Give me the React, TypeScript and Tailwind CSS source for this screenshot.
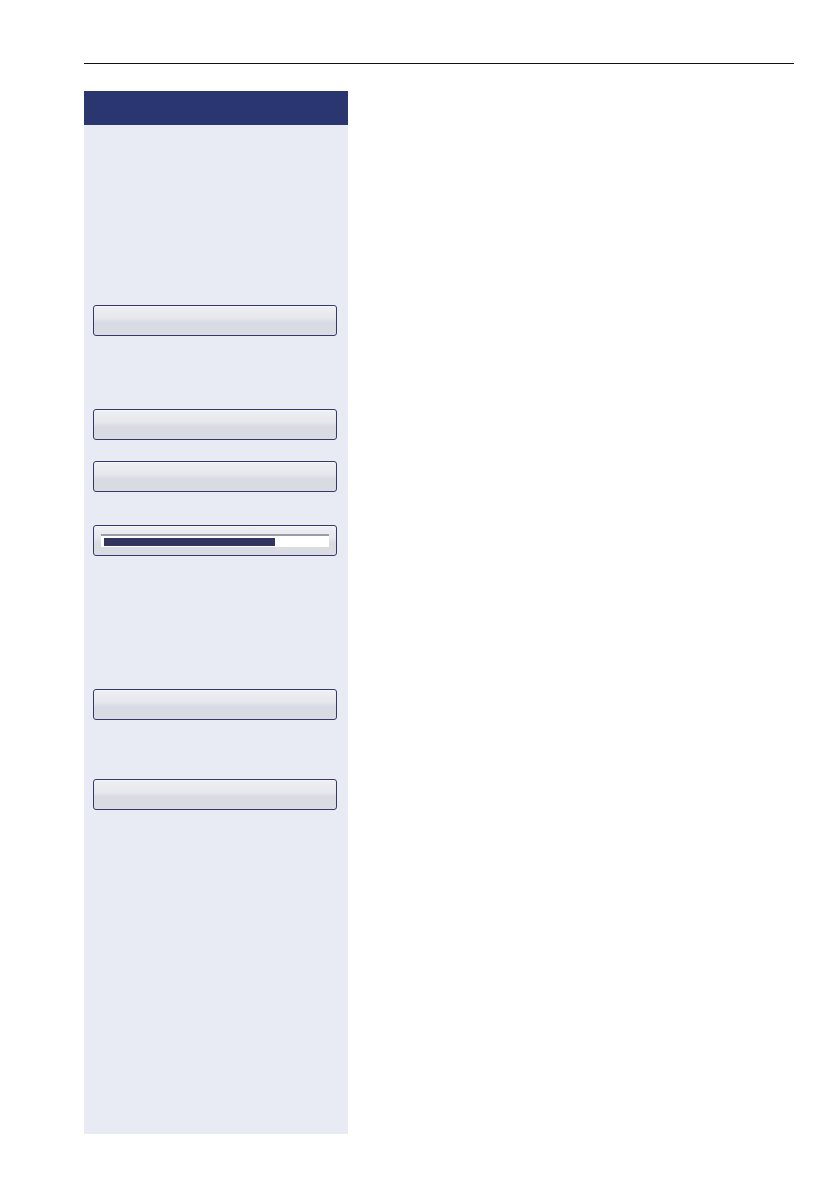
import React from "react";

const btn =
  "h-[31px] w-[244px] rounded-[3px] border border-[#35396a] bg-[linear-gradient(to_bottom,#eef0f4_0%,#e5e7ec_42%,#d8dbe2_58%,#d9dce3_100%)] shadow-[inset_0_1px_0_#f5f6f9]";

export default function App() {
  return (
    <div className="min-h-[1192px] w-[838px] bg-white font-['Liberation_Sans',sans-serif]">
      <div className="pt-[63px] pl-[84px]">
        <div className="h-px w-[710px] bg-[#111]" />
      </div>
      <div className="mt-[27px] ml-[84px] flex h-[1043px] w-[264px] flex-col bg-[#e8ebf3]">
        <div className="h-[34px] bg-[#293670]" />
        <div className="flex flex-col pl-[9px]">
          <div className={`${btn} mt-[180px]`} />
          <div className={`${btn} mt-[73px]`} />
          <div className={`${btn} mt-[21px]`} />
          <div className={`${btn} mt-[33px] px-[7px] pt-[8px]`}>
            <div className="h-[13px] w-full border-t-2 border-[#9a9ca8] bg-white pl-[3px]">
              <div className="mt-[2px] h-[8px] w-[171px] bg-[#30345e]" />
            </div>
          </div>
          <div className={`${btn} mt-[133px]`} />
          <div className={`${btn} mt-[59px]`} />
        </div>
      </div>
    </div>
  );
}
